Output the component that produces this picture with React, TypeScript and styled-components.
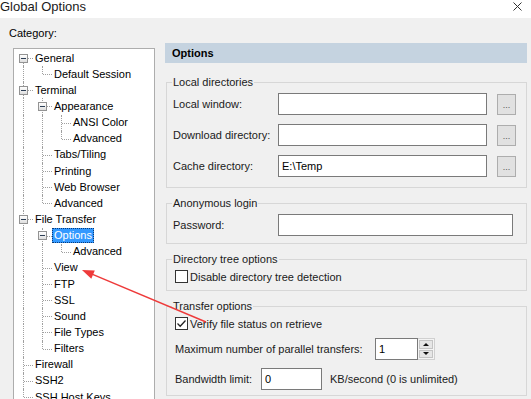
import React from 'react';
import styled, { createGlobalStyle, css } from 'styled-components';

const GlobalStyle = createGlobalStyle`
  html, body {
    margin: 0;
    padding: 0;
    overflow: hidden;
  }
  body {
    font-family: "Liberation Sans", Arial, sans-serif;
    font-size: 11px;
    color: #000;
    background: #f0f0f0;
  }
`;

type TreeNode = { label: string; children?: TreeNode[]; selected?: boolean };

const categories: TreeNode[] = [
  { label: 'General', children: [{ label: 'Default Session' }] },
  {
    label: 'Terminal',
    children: [
      { label: 'Appearance', children: [{ label: 'ANSI Color' }, { label: 'Advanced' }] },
      { label: 'Tabs/Tiling' },
      { label: 'Printing' },
      { label: 'Web Browser' },
      { label: 'Advanced' },
    ],
  },
  {
    label: 'File Transfer',
    children: [
      { label: 'Options', selected: true, children: [{ label: 'Advanced' }] },
      { label: 'View' },
      { label: 'FTP' },
      { label: 'SSL' },
      { label: 'Sound' },
      { label: 'File Types' },
      { label: 'Filters' },
    ],
  },
  { label: 'Firewall' },
  { label: 'SSH2' },
  { label: 'SSH Host Keys' },
];

type FlatRow = { node: TreeNode; depth: number; first: boolean; last: boolean; guides: boolean[] };

const flatten = (nodes: TreeNode[], depth: number, guides: boolean[], out: FlatRow[]) => {
  nodes.forEach((node, i) => {
    const last = i === nodes.length - 1;
    out.push({ node, depth, first: i === 0, last, guides });
    if (node.children) flatten(node.children, depth + 1, [...guides, !last], out);
  });
  return out;
};

const rows = flatten(categories, 0, [], []);

const Window = styled.div`
  position: relative;
  width: 531px;
  height: 399px;
  overflow: hidden;
  background: #f0f0f0;
`;

const TitleBar = styled.div`
  height: 18px;
  background: #fff;
  display: flex;
  justify-content: space-between;
  align-items: flex-start;
  padding-right: 9px;
`;

const Title = styled.div`
  font-size: 13px;
  line-height: 13px;
  color: #1a1a1a;
`;

const CloseIcon = styled.svg`
  margin-top: 2px;
`;

const Body = styled.div`
  display: grid;
  grid-template-columns: 146px 1fr;
  column-gap: 10px;
  align-items: start;
  padding: 9px 4px 0 9px;
`;

const Sidebar = styled.div`
  display: flex;
  flex-direction: column;
`;

const CategoryLabel = styled.div`
  line-height: 13px;
  margin-bottom: 8px;
`;

const TreeBox = styled.div`
  margin-left: 4px;
  height: 360px;
  background: #fff;
  border: 1px solid #adadad;
  padding-top: 1px;
  overflow: hidden;
`;

const TreeRow = styled.div`
  display: flex;
  align-items: stretch;
  height: 16.15px;
`;

const TreeGuide = styled.div<{ $on: boolean }>`
  position: relative;
  width: 19px;
  flex-shrink: 0;
  ${(p) =>
    p.$on &&
    css`
      &::before {
        content: '';
        position: absolute;
        left: 9px;
        top: 0;
        bottom: 0;
        border-left: 1px dotted #a0a0a0;
      }
    `}
`;

const TreeJoint = styled.div<{ $up: boolean; $down: boolean }>`
  position: relative;
  width: 19px;
  flex-shrink: 0;
  display: flex;
  align-items: center;
  padding-left: 5px;
  box-sizing: border-box;
  &::before {
    content: '';
    position: absolute;
    left: 9px;
    top: ${(p) => (p.$up ? '0' : '50%')};
    bottom: ${(p) => (p.$down ? '0' : '50%')};
    border-left: 1px dotted #a0a0a0;
  }
  &::after {
    content: '';
    position: absolute;
    left: 10px;
    right: 0;
    top: 50%;
    border-top: 1px dotted #a0a0a0;
  }
`;

const Expander = styled.div`
  position: relative;
  z-index: 1;
  width: 9px;
  height: 9px;
  box-sizing: border-box;
  border: 1px solid #939393;
  background: linear-gradient(#ffffff, #dedede);
  display: flex;
  align-items: center;
  justify-content: center;
  &::after {
    content: '';
    width: 5px;
    height: 1px;
    background: #2c3e55;
  }
`;

const NodeLabel = styled.span<{ $selected?: boolean }>`
  align-self: center;
  height: 15px;
  line-height: 15px;
  padding: 0 2px;
  white-space: nowrap;
  box-sizing: border-box;
  ${(p) =>
    p.$selected &&
    css`
      background: #3399ff;
      color: #fff;
      outline: 1px dotted #0b3a75;
      outline-offset: -1px;
    `}
`;

const Panel = styled.div`
  margin-top: 16px;
  display: flex;
  flex-direction: column;
`;

const PanelHeader = styled.div`
  height: 20px;
  line-height: 20px;
  background: #c5d3e0;
  font-weight: bold;
  padding-left: 7px;
`;

const Group = styled.fieldset<{ $top: number; $bottom: number }>`
  margin: ${(p) => p.$top}px 0 0 1px;
  padding: 4px 10px ${(p) => p.$bottom}px 6px;
  border: 1px solid #d7d7d7;
  min-width: 0;
`;

const Legend = styled.legend`
  padding: 0 1px;
  margin-left: -1px;
  font-size: 11px;
  line-height: 13px;
  color: #1a1a1a;
`;

const GroupBody = styled.div<{ $gap: number; $indent?: number }>`
  display: flex;
  flex-direction: column;
  gap: ${(p) => p.$gap}px;
  padding-left: ${(p) => p.$indent ?? 0}px;
`;

const FieldRow = styled.div`
  display: flex;
  align-items: center;
`;

const FieldLabel = styled.span<{ $width: number }>`
  width: ${(p) => p.$width}px;
  flex-shrink: 0;
  white-space: nowrap;
  color: #1a1a1a;
`;

const TextField = styled.input<{ $width?: number; $trim?: number }>`
  box-sizing: border-box;
  height: 22px;
  border: 1px solid #7a7a7a;
  padding: 0 3px;
  margin: 0 ${(p) => p.$trim ?? 0}px 0 0;
  background: #fff;
  font-family: inherit;
  font-size: 11px;
  color: #000;
  outline: none;
  min-width: 0;
  ${(p) => (p.$width ? `width: ${p.$width}px; flex: none;` : 'flex: 1;')}
`;

const BrowseButton = styled.div`
  box-sizing: border-box;
  width: 19px;
  height: 21px;
  margin-left: 10px;
  background: #e1e1e1;
  border: 1px solid #adadad;
  display: flex;
  align-items: flex-end;
  justify-content: center;
  padding-bottom: 4px;
  font-size: 9px;
  line-height: 9px;
  color: #555;
`;

const CheckRow = styled.label`
  display: flex;
  align-items: center;
  gap: 2px;
  height: 13px;
  color: #1a1a1a;
`;

const CheckBox = styled.span`
  box-sizing: border-box;
  width: 13px;
  height: 13px;
  border: 1px solid #333;
  background: #fff;
  display: flex;
  align-items: center;
  justify-content: center;
`;

const SpinBox = styled.div`
  display: flex;
  height: 22px;
`;

const SpinButtons = styled.div`
  display: flex;
  flex-direction: column;
  width: 17px;
  border: 1px solid #d0d0d0;
  border-left: none;
  box-sizing: border-box;
  background: #f4f4f4;
  padding: 1px;
  gap: 1px;
`;

const SpinButton = styled.div<{ $down?: boolean }>`
  flex: 1;
  background: #e6e6e6;
  border: 1px solid #c4c4c4;
  display: flex;
  align-items: center;
  justify-content: center;
  &::after {
    content: '';
    border-left: 3px solid transparent;
    border-right: 3px solid transparent;
    ${(p) => (p.$down ? 'border-top: 3px solid #111;' : 'border-bottom: 3px solid #111;')}
  }
`;

const Suffix = styled.span`
  margin-left: 8px;
  color: #1a1a1a;
`;

const Overlay = styled.svg`
  position: absolute;
  left: 0;
  top: 0;
  pointer-events: none;
`;

const Check: React.FC<{ checked?: boolean; children: React.ReactNode }> = ({ checked, children }) => (
  <CheckRow>
    <CheckBox>
      {checked && (
        <svg width="11" height="11" viewBox="0 0 11 11">
          <path d="M1.5 5.5 L4.2 8.2 L9.5 2.5" fill="none" stroke="#222" strokeWidth="1.3" />
        </svg>
      )}
    </CheckBox>
    {children}
  </CheckRow>
);

const App: React.FC = () => {
  return (
    <Window>
      <GlobalStyle />
      <TitleBar>
        <Title>Global Options</Title>
        <CloseIcon width="9" height="9" viewBox="0 0 9 9">
          <path d="M0.5 0.5 L8.5 8.5 M8.5 0.5 L0.5 8.5" stroke="#333" strokeWidth="1" />
        </CloseIcon>
      </TitleBar>

      <Body>
        <Sidebar>
          <CategoryLabel>Category:</CategoryLabel>
          <TreeBox>
            {rows.map((row, i) => (
              <TreeRow key={i}>
                {row.guides.map((on, k) => (
                  <TreeGuide key={k} $on={on} />
                ))}
                <TreeJoint $up={row.depth > 0 || !row.first} $down={!row.last}>
                  {row.node.children && <Expander />}
                </TreeJoint>
                <NodeLabel $selected={row.node.selected}>{row.node.label}</NodeLabel>
              </TreeRow>
            ))}
          </TreeBox>
        </Sidebar>

        <Panel>
          <PanelHeader>Options</PanelHeader>

          <Group $top={13} $bottom={10}>
            <Legend>Local directories</Legend>
            <GroupBody $gap={9}>
              <FieldRow>
                <FieldLabel $width={105}>Local window:</FieldLabel>
                <TextField readOnly defaultValue="" />
                <BrowseButton>...</BrowseButton>
              </FieldRow>
              <FieldRow>
                <FieldLabel $width={105}>Download directory:</FieldLabel>
                <TextField readOnly defaultValue="" />
                <BrowseButton>...</BrowseButton>
              </FieldRow>
              <FieldRow>
                <FieldLabel $width={105}>Cache directory:</FieldLabel>
                <TextField readOnly defaultValue="E:\Temp" />
                <BrowseButton>...</BrowseButton>
              </FieldRow>
            </GroupBody>
          </Group>

          <Group $top={9} $bottom={7}>
            <Legend>Anonymous login</Legend>
            <GroupBody $gap={9}>
              <FieldRow>
                <FieldLabel $width={105}>Password:</FieldLabel>
                <TextField readOnly defaultValue="" $trim={3} />
              </FieldRow>
            </GroupBody>
          </Group>

          <Group $top={9} $bottom={7}>
            <Legend>Directory tree options</Legend>
            <GroupBody $gap={9} $indent={2}>
              <Check>Disable directory tree detection</Check>
            </GroupBody>
          </Group>

          <Group $top={9} $bottom={5}>
            <Legend>Transfer options</Legend>
            <GroupBody $gap={8} $indent={2}>
              <Check checked>Verify file status on retrieve</Check>
              <FieldRow>
                <FieldLabel $width={200}>Maximum number of parallel transfers:</FieldLabel>
                <SpinBox>
                  <TextField readOnly defaultValue="1" $width={43} />
                  <SpinButtons>
                    <SpinButton />
                    <SpinButton $down />
                  </SpinButtons>
                </SpinBox>
              </FieldRow>
              <FieldRow>
                <FieldLabel $width={86}>Bandwidth limit:</FieldLabel>
                <TextField readOnly defaultValue="0" $width={61} />
                <Suffix>KB/second (0 is unlimited)</Suffix>
              </FieldRow>
            </GroupBody>
          </Group>
        </Panel>
      </Body>

      <Overlay width="531" height="399" viewBox="0 0 531 399">
        <line x1="206" y1="322" x2="92" y2="274.2" stroke="#ee3a3a" strokeWidth="1.4" />
        <polygon points="82,270 91.3,278.8 94.8,270.5" fill="#ee3a3a" />
      </Overlay>
    </Window>
  );
};

export default App;
